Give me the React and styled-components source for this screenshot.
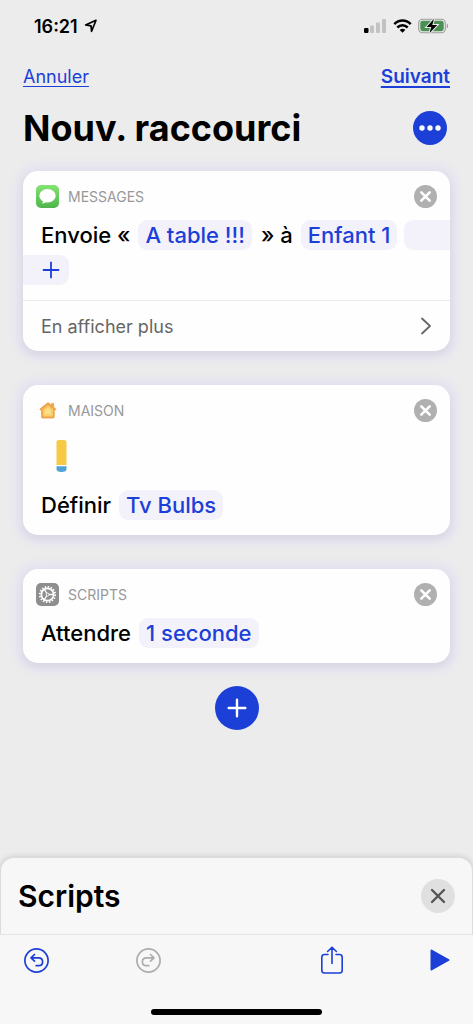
import React from "react";
import styled, { createGlobalStyle } from "styled-components";

const BLUE = "#1c3fd7";

const App = () => {
	return (
		<Page>
			<GlobalStyle />
			<StatusBar>
				<Time>
					16:21
					<LocationIcon />
				</Time>
				<StatusIcons>
					<SignalIcon />
					<WifiIcon />
					<BatteryIcon />
				</StatusIcons>
			</StatusBar>
			<Nav>
				<NavLink href="#annuler">Annuler</NavLink>
				<NavLink href="#suivant" $strong>
					Suivant
				</NavLink>
			</Nav>
			<TitleRow>
				<Title>Nouv. raccourci</Title>
				<MoreButton aria-label="Options">
					<svg width="34" height="34" viewBox="0 0 34 34" fill="#fff">
						<circle cx="9" cy="17" r="2.7" />
						<circle cx="17" cy="17" r="2.7" />
						<circle cx="25" cy="17" r="2.7" />
					</svg>
				</MoreButton>
			</TitleRow>
			<Actions>
				<Card>
					<CardHeader icon={<MessagesIcon />} name="Messages" />
					<Sentence>
						<span>Envoie «</span>
						<Chip>A table !!!</Chip>
						<span>» à</span>
						<Chip $tight>Enfant 1</Chip>
						<ChipTail />
					</Sentence>
					<ChipEnd aria-label="Ajouter un destinataire">
						<svg width="18" height="18" viewBox="0 0 18 18" stroke={BLUE} strokeWidth="1.8" strokeLinecap="round">
							<path d="M9 1.5v15M1.5 9h15" />
						</svg>
					</ChipEnd>
					<ShowMore>
						En afficher plus
						<svg width="12" height="18" viewBox="0 0 12 18" fill="none" stroke="#666" strokeWidth="1.8" strokeLinecap="round" strokeLinejoin="round">
							<path d="M2 1.5L10 9L2 16.5" />
						</svg>
					</ShowMore>
				</Card>
				<Card>
					<CardHeader icon={<HomeIcon />} name="Maison" />
					<Accessory>
						<TubeIcon />
					</Accessory>
					<Sentence $last>
						<span>Définir</span>
						<Chip>Tv Bulbs</Chip>
					</Sentence>
				</Card>
				<Card>
					<CardHeader icon={<GearIcon />} name="Scripts" />
					<Sentence $last>
						<span>Attendre</span>
						<Chip>1 seconde</Chip>
					</Sentence>
				</Card>
				<AddButton aria-label="Ajouter une action">
					<svg width="20" height="20" viewBox="0 0 20 20" stroke="#fff" strokeWidth="2.4" strokeLinecap="round">
						<path d="M10 1.7v16.6M1.7 10h16.6" />
					</svg>
				</AddButton>
			</Actions>
			<Sheet>
				<SheetTitle>Scripts</SheetTitle>
				<CloseButton aria-label="Fermer">
					<svg width="16" height="16" viewBox="0 0 16 16" stroke="#555" strokeWidth="2.4" strokeLinecap="round">
						<path d="M2 2l12 12M14 2L2 14" />
					</svg>
				</CloseButton>
			</Sheet>
			<Toolbar>
				<ToolGroup>
					<IconButton aria-label="Annuler la modification">
						<UndoIcon color={BLUE} />
					</IconButton>
					<IconButton aria-label="Rétablir" disabled>
						<UndoIcon color="#adadad" flip />
					</IconButton>
				</ToolGroup>
				<ToolGroup>
					<IconButton aria-label="Partager">
						<ShareIcon />
					</IconButton>
					<IconButton aria-label="Lire">
						<svg width="20" height="22" viewBox="0 0 20 22">
							<path d="M1.5 1.5L18.5 11L1.5 20.5Z" fill={BLUE} stroke={BLUE} strokeWidth="2" strokeLinejoin="round" />
						</svg>
					</IconButton>
				</ToolGroup>
			</Toolbar>
			<HomeIndicator />
		</Page>
	);
};

const CardHeader = ({ icon, name }) => (
	<CardHead>
		{icon}
		<AppName>{name}</AppName>
		<RemoveButton aria-label={`Supprimer ${name}`}>
			<svg width="23" height="23" viewBox="0 0 23 23">
				<circle cx="11.5" cy="11.5" r="11.5" fill="#b0b0b0" />
				<path d="M7.3 7.3l8.4 8.4M15.7 7.3l-8.4 8.4" stroke="#fff" strokeWidth="2.6" strokeLinecap="round" />
			</svg>
		</RemoveButton>
	</CardHead>
);

const LocationIcon = () => (
	<svg width="14" height="14" viewBox="0 0 14 14" fill="none" stroke="#000" strokeWidth="1.7" strokeLinejoin="round">
		<path d="M12 1.3L1.6 6L7 6.9L7.6 12.3Z" />
	</svg>
);

const SignalIcon = () => (
	<svg width="23" height="14" viewBox="0 0 23 14">
		<rect x="0" y="9" width="4.5" height="5" rx="1.2" fill="#000" />
		<rect x="6" y="6.5" width="4" height="7.5" rx="1" fill="#c2c2c2" />
		<rect x="12" y="3.5" width="4" height="10.5" rx="1" fill="#c2c2c2" />
		<rect x="18" y="0" width="4" height="14" rx="1" fill="#c2c2c2" />
	</svg>
);

const WifiIcon = () => (
	<svg width="19" height="14" viewBox="0 0 19 14" fill="none" stroke="#000" strokeWidth="2.5">
		<path d="M1.3 5.2C6 .3 13 .3 17.7 5.2" />
		<path d="M4.3 8.5C7.3 5.5 11.7 5.5 14.7 8.5" />
		<path d="M9.5 13.7L6.7 10.9C8.3 9.5 10.7 9.5 12.3 10.9Z" fill="#000" stroke="none" />
	</svg>
);

const BatteryIcon = () => (
	<svg width="31" height="16" viewBox="0 0 31 16">
		<rect x=".7" y="1.2" width="26.6" height="13.6" rx="4" fill="none" stroke="#9a9a9a" strokeWidth="1.1" />
		<rect x="2.3" y="2.8" width="23.4" height="10.4" rx="2.4" fill="#4b9153" />
		<path d="M28.8 5.5c1.8.8 1.8 4.2 0 5z" fill="#9a9a9a" />
		<path d="M16 .8L8.6 9h4.7L11.4 15.2L19.2 6.9h-4.9z" fill="#000" stroke="#ececec" strokeWidth="2" paintOrder="stroke" />
	</svg>
);

const MessagesIcon = () => (
	<svg width="23" height="23" viewBox="0 0 23 23">
		<defs>
			<linearGradient id="msg" x1="0" y1="0" x2="0" y2="1">
				<stop offset="0" stopColor="#84e372" />
				<stop offset="1" stopColor="#4fb54b" />
			</linearGradient>
		</defs>
		<rect width="23" height="23" rx="5" fill="url(#msg)" />
		<ellipse cx="11.5" cy="10.8" rx="8.2" ry="6.8" fill="#fff" />
		<path d="M7.3 14.5c.2 2-.6 3.2-1.5 4 2.2.1 4-.8 5.2-2.2z" fill="#fff" />
	</svg>
);

const HomeIcon = () => (
	<svg width="23" height="23" viewBox="0 0 23 23" strokeLinejoin="round">
		<path
			d="M12 3.6L15.6 6.5V4.6h2v3.5l1.9 1.6c.7.7.3 1.4-.4 1.4h-.9v6.9q0 1-1 1H6.600q-1 0-1-1v-6.900h-.9c-.7 0-1.100-.7-.4-1.400z"
			fill="#f2a84c"
			stroke="#eb9a45"
			strokeWidth=".8"
		/>
		<path d="M12 7.500L16 11V16.500H8V11Z" fill="#fbe08a" stroke="#f8cd6a" strokeWidth="2" />
	</svg>
);

const TubeIcon = () => (
	<svg width="11" height="32" viewBox="0 0 11 32">
		<path d="M.5 25V2.300Q.5 0 2.800 0H8.200Q10.500 0 10.500 2.300V25Z" fill="#f7ca45" />
		<path d="M.5 26.200H10.500V29Q10.500 32 5.500 32T.5 29Z" fill="#4ea3d4" />
	</svg>
);

const GearIcon = () => (
	<svg width="23" height="23" viewBox="0 0 23 23" fill="none" stroke="#fff">
		<rect width="23" height="23" rx="5" fill="#8e8e8e" stroke="none" />
		<circle cx="11.5" cy="11.5" r="7.7" strokeWidth="1.8" strokeDasharray="1.5 1.524" />
		<circle cx="11.5" cy="11.5" r="6.1" strokeWidth="1.7" />
		<circle cx="11.5" cy="11.5" r="1.4" strokeWidth="1" />
		<path d="M13 11.5h5M10.7 10.2L8.4 6.2M10.7 12.8L8.4 16.8" strokeWidth="1.3" />
	</svg>
);

const UndoIcon = ({ color, flip }) => (
	<svg width="25" height="25" viewBox="0 0 25 25" fill="none" stroke={color} strokeWidth="1.7" strokeLinecap="round" strokeLinejoin="round">
		<circle cx="12.5" cy="12.5" r="11.6" />
		<g transform={flip ? "translate(25 0) scale(-1 1)" : undefined}>
			<path d="M10.5 6.5L7 9.8L10.5 13.1M7.3 9.8H14.5C17 9.8 18.6 11.4 18.6 13.7S17 17.7 14.5 17.7H12.2" />
		</g>
	</svg>
);

const ShareIcon = () => (
	<svg width="22" height="28" viewBox="0 0 22 28" fill="none" stroke={BLUE} strokeWidth="1.6" strokeLinecap="round" strokeLinejoin="round">
		<path d="M7 8.5H3.5Q.8 8.5 .8 11.2V24.3Q.8 27 3.5 27H18.500Q21.200 27 21.200 24.300V11.200Q21.200 8.500 18.500 8.500H15M11 17.500V1.200M6.600 5.500L11 1.200L15.400 5.500" />
	</svg>
);

const GlobalStyle = createGlobalStyle`
	* {
		box-sizing: border-box;
	}
	body {
		margin: 0;
		background: #ececec;
		color: #000;
		font-family: Inter, "Liberation Sans", sans-serif;
	}
	button {
		padding: 0;
		border: none;
		background: none;
		font: inherit;
		color: inherit;
	}
	svg {
		display: block;
		flex-shrink: 0;
	}
`;

const Page = styled.div`
	display: flex;
	flex-direction: column;
	min-height: 100vh;
	background: #ececec;
`;

const StatusBar = styled.div`
	display: flex;
	justify-content: space-between;
	align-items: center;
	height: 52px;
	padding: 0 24px 0 34px;
`;

const Time = styled.div`
	display: flex;
	align-items: center;
	gap: 6px;
	font-size: 18px;
	font-weight: 600;
`;

const StatusIcons = styled.div`
	display: flex;
	align-items: center;
	gap: 6px;
`;

const Nav = styled.nav`
	display: flex;
	justify-content: space-between;
	align-items: center;
	height: 48px;
	padding: 0 23px;
`;

const NavLink = styled.a`
	color: ${BLUE};
	font-size: ${({ $strong }) => ($strong ? 19 : 18)}px;
	font-weight: ${({ $strong }) => ($strong ? 600 : 400)};
	text-decoration-thickness: ${({ $strong }) => ($strong ? 2 : 1)}px;
	text-underline-offset: 3px;
	text-decoration-skip-ink: none;
`;

const TitleRow = styled.div`
	display: flex;
	justify-content: space-between;
	align-items: center;
	height: 56px;
	padding: 0 26px 0 23px;
`;

const Title = styled.h1`
	margin: 0;
	font-size: 36px;
	font-weight: 700;
	white-space: nowrap;
`;

const MoreButton = styled.button`
	border-radius: 50%;
	background: ${BLUE};
`;

const Actions = styled.main`
	display: flex;
	flex: 1;
	flex-direction: column;
	gap: 34px;
	padding: 15px 23px 24px;
`;

const Card = styled.section`
	overflow: hidden;
	border-radius: 15px;
	background: #fefefe;
	box-shadow:
		0 3px 8px rgba(0, 0, 0, 0.08),
		0 1px 6px 9px #e7e5f0;
`;

const CardHead = styled.header`
	display: flex;
	align-items: center;
	gap: 9px;
	padding: 14px 13px 12px;
`;

const AppName = styled.h2`
	flex: 1;
	margin: 0;
	color: #98989a;
	font-size: 14px;
	font-weight: 400;
	line-height: 23px;
	text-transform: uppercase;
`;

const RemoveButton = styled.button``;

const Sentence = styled.div`
	display: flex;
	padding: 0 0 ${({ $last }) => ($last ? 15 : 5)}px 18px;
	font-size: 22px;
	font-weight: 500;
	line-height: 30px;
	white-space: nowrap;
`;

const Chip = styled.span`
	margin: 0 ${({ $tight }) => ($tight ? 7 : 9)}px 0 8px;
	padding: 0 7px;
	border-radius: 9px;
	background: #f3f2fb;
	color: ${BLUE};
`;

const ChipTail = styled.span`
	flex: 1;
	border-radius: 9px 0 0 9px;
	background: #f3f2fb;
`;

const ChipEnd = styled.button`
	display: flex;
	align-items: center;
	height: 30px;
	margin-bottom: 15px;
	padding: 0 9px 0 19px;
	border-radius: 0 9px 9px 0;
	background: #f3f2fb;
`;

const ShowMore = styled.button`
	display: flex;
	justify-content: space-between;
	align-items: center;
	width: 100%;
	height: 51px;
	padding: 0 18px;
	border-top: 1px solid #ebebed;
	color: #666;
	font-size: 18px;
`;

const Accessory = styled.div`
	padding: 6px 33px 18px;
`;

const AddButton = styled.button`
	display: flex;
	align-items: center;
	justify-content: center;
	align-self: center;
	width: 44px;
	height: 44px;
	margin-top: -11px;
	border-radius: 50%;
	background: ${BLUE};
`;

const Sheet = styled.section`
	display: flex;
	justify-content: space-between;
	align-items: center;
	height: 77px;
	padding: 0 17px;
	border: 1px solid #dcdcdc;
	border-bottom: none;
	border-radius: 14px 14px 0 0;
	background: #f7f7f7;
	box-shadow: 0 -1px 5px rgba(60, 60, 90, 0.16);
`;

const SheetTitle = styled.h2`
	margin: 0;
	font-size: 30px;
	font-weight: 600;
`;

const CloseButton = styled.button`
	display: flex;
	align-items: center;
	justify-content: center;
	width: 34px;
	height: 34px;
	border-radius: 50%;
	background: #e0e0e0;
`;

const Toolbar = styled.footer`
	position: relative;
	display: flex;
	justify-content: space-between;
	align-items: center;
	height: 51px;
	padding: 0 23px 0 24px;
	border-top: 1px solid #e4e4e4;
	background: #f7f7f7;
`;

const ToolGroup = styled.div`
	display: flex;
	align-items: center;
	gap: 87px;
`;

const IconButton = styled.button``;

const HomeIndicator = styled.div`
	display: flex;
	justify-content: center;
	padding: 24px 0 9px;
	background: #f7f7f7;

	&::after {
		content: "";
		width: 36%;
		height: 6px;
		border-radius: 3px;
		background: #000;
	}
`;

export default App;
